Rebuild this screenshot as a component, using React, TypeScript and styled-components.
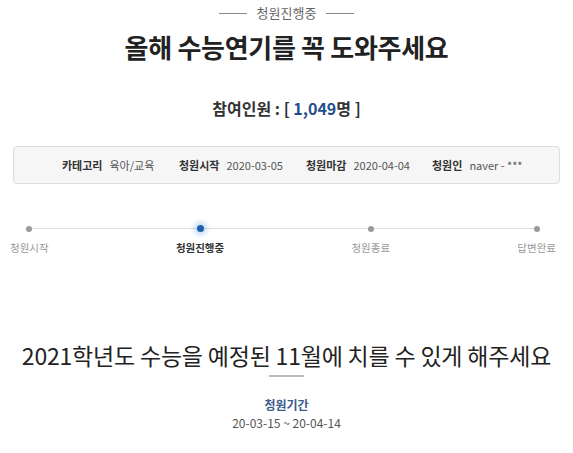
import React from "react";
import styled, { createGlobalStyle } from "styled-components";

const Global = createGlobalStyle`
  html, body { margin: 0; padding: 0; background: #fff; }
  body { font-family: "Noto Sans CJK KR", "Noto Sans", sans-serif; color: #222; }
`;

const Page = styled.div`
  width: 573px;
  height: 453px;
  overflow: hidden;
  display: flex;
  flex-direction: column;
  align-items: center;
`;

const Status = styled.div`
  margin-top: 3px;
  display: flex;
  align-items: center;
  gap: 10px;
  font-size: 13px;
  line-height: 20px;
  color: #666;
  &::before, &::after {
    content: "";
    width: 28px;
    height: 1px;
    background: #888;
  }
`;

const Title = styled.h1`
  margin: 7px 0 0;
  font-size: 26px;
  font-weight: 700;
  line-height: 34px;
  color: #222;
  letter-spacing: -0.3px;
`;

const Count = styled.div`
  margin-top: 32px;
  font-size: 16px;
  font-weight: 700;
  line-height: 24px;
  color: #333;
`;

const CountNum = styled.span`
  color: #1f4e8c;
`;

const InfoBox = styled.div`
  box-sizing: border-box;
  margin-top: 26px;
  width: 547px;
  height: 38px;
  background: #f6f6f6;
  border: 1px solid #ddd;
  border-radius: 4px;
  display: flex;
  align-items: center;
  padding-left: 48px;
  font-size: 11px;
  color: #555;
`;

const InfoItem = styled.div<{ $w: number }>`
  width: ${(p) => p.$w}px;
  display: flex;
  gap: 7px;
  white-space: nowrap;
`;

const InfoLabel = styled.span`
  font-weight: 700;
  color: #333;
`;

const Steps = styled.div`
  margin-top: 37px;
  width: 573px;
  position: relative;
  display: flex;
  justify-content: space-between;
  padding: 0 17px 0 10px;
  box-sizing: border-box;
`;

const Track = styled.div`
  position: absolute;
  left: 28px;
  right: 35px;
  top: 7px;
  height: 1px;
  background: #ddd;
`;

const Step = styled.div`
  position: relative;
  display: flex;
  flex-direction: column;
  align-items: center;
`;

const Dot = styled.span<{ $active?: boolean }>`
  width: ${(p) => (p.$active ? 7 : 6)}px;
  height: ${(p) => (p.$active ? 7 : 6)}px;
  margin-top: ${(p) => (p.$active ? 4 : 4.5)}px;
  margin-bottom: ${(p) => (p.$active ? 0 : 0.5)}px;
  border-radius: 50%;
  background: ${(p) => (p.$active ? "#1f5fa8" : "#999")};
  box-shadow: ${(p) => (p.$active ? "0 0 5px 3px rgba(80,150,230,0.35)" : "none")};
`;

const StepLabel = styled.span<{ $active?: boolean }>`
  margin-top: 8px;
  font-size: 10.5px;
  line-height: 16px;
  white-space: nowrap;
  font-weight: ${(p) => (p.$active ? 700 : 400)};
  color: ${(p) => (p.$active ? "#333" : "#999")};
`;

const Headline = styled.h2`
  margin: 84px 0 0;
  font-size: 23px;
  font-weight: 400;
  line-height: 30px;
  color: #222;
  letter-spacing: -0.2px;
  white-space: nowrap;
`;

const Rule = styled.div`
  margin-top: 5px;
  width: 35px;
  height: 2px;
  background: #bbb;
`;

const PeriodLabel = styled.div`
  margin-top: 19px;
  font-size: 12px;
  font-weight: 700;
  line-height: 18px;
  color: #3b5a8a;
`;

const PeriodValue = styled.div`
  font-size: 12px;
  line-height: 18px;
  color: #555;
`;

const steps = [
  { label: "청원시작" },
  { label: "청원진행중", active: true },
  { label: "청원종료" },
  { label: "답변완료" },
];

export default function App() {
  return (
    <Page>
      <Global />
      <Status>청원진행중</Status>
      <Title>올해 수능연기를 꼭 도와주세요</Title>
      <Count>
        참여인원 : [ <CountNum>1,049</CountNum>명 ]
      </Count>
      <InfoBox>
        <InfoItem $w={117}>
          <InfoLabel>카테고리</InfoLabel>육아/교육
        </InfoItem>
        <InfoItem $w={127}>
          <InfoLabel>청원시작</InfoLabel>2020-03-05
        </InfoItem>
        <InfoItem $w={126}>
          <InfoLabel>청원마감</InfoLabel>2020-04-04
        </InfoItem>
        <InfoItem $w={100}>
          <InfoLabel>청원인</InfoLabel>naver - ***
        </InfoItem>
      </InfoBox>
      <Steps>
        <Track />
        {steps.map((s) => (
          <Step key={s.label}>
            <Dot $active={s.active} />
            <StepLabel $active={s.active}>{s.label}</StepLabel>
          </Step>
        ))}
      </Steps>
      <Headline>2021학년도 수능을 예정된 11월에 치를 수 있게 해주세요</Headline>
      <Rule />
      <PeriodLabel>청원기간</PeriodLabel>
      <PeriodValue>20-03-15 ~ 20-04-14</PeriodValue>
    </Page>
  );
}
